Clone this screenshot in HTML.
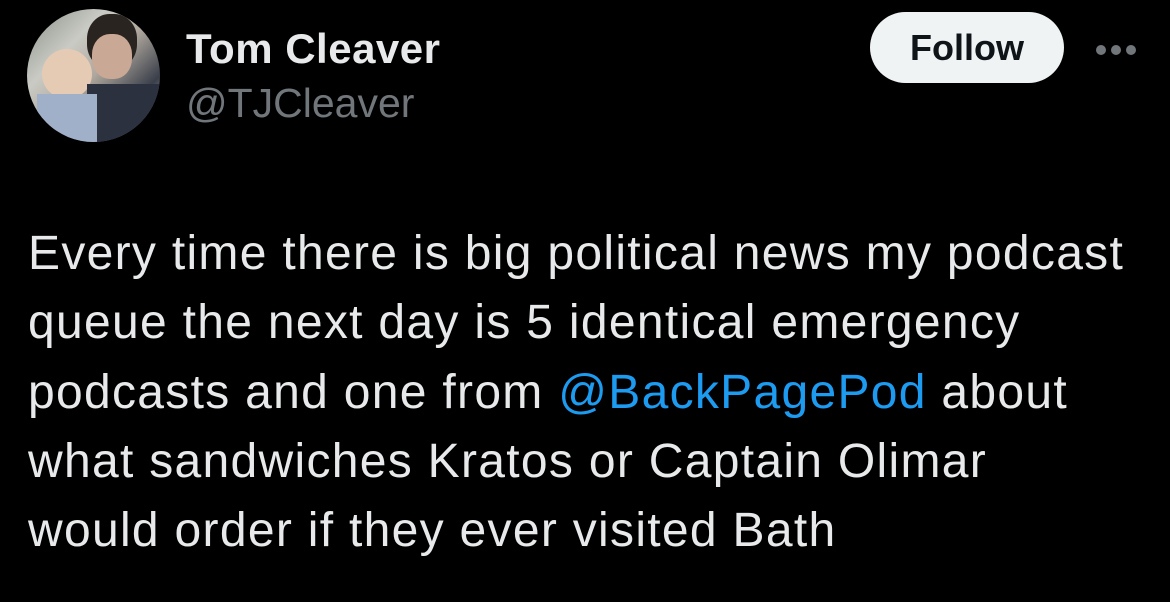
<!DOCTYPE html>
<html><head><style>
body{margin:0;width:1170px;height:602px;background:#000;overflow:hidden;font-family:"Liberation Sans",sans-serif;position:relative}
.av{position:absolute;left:27px;top:9px;width:133px;height:133px;border-radius:50%;overflow:hidden;background:linear-gradient(135deg,#8a8f88 0%,#c9cbc4 30%,#b0a89e 50%,#3a3f4a 75%,#d9dde2 100%)}
.name{position:absolute;left:186px;top:25px;font-size:42px;letter-spacing:0.5px;font-weight:bold;color:#e7e9ea}
.handle{position:absolute;left:186px;top:80px;font-size:41px;color:#71767b}
.follow{position:absolute;left:870px;top:12px;width:194px;height:71px;border-radius:36px;background:#eff3f4;color:#0f1419;font-size:36px;font-weight:bold;text-align:center;line-height:71px}
.dots{position:absolute;left:1096px;top:42px}
.dots span{display:inline-block;width:10px;height:10px;border-radius:50%;background:#71767b;margin-right:5px}
.text{position:absolute;left:28px;top:219px;white-space:nowrap;font-size:48px;letter-spacing:1.3px;line-height:69.3px;color:#e7e9ea}
.text a{color:#1d9bf0}
</style></head><body>
<div class="av">
<div style="position:absolute;left:60px;top:5px;width:50px;height:55px;border-radius:45%;background:#2a2420"></div>
<div style="position:absolute;left:65px;top:25px;width:40px;height:45px;border-radius:45%;background:#c9a896"></div>
<div style="position:absolute;left:15px;top:40px;width:50px;height:50px;border-radius:50%;background:#e6cbb4"></div>
<div style="position:absolute;left:60px;top:75px;width:80px;height:60px;background:#2c3140"></div>
<div style="position:absolute;left:10px;top:85px;width:60px;height:50px;background:#9fb0c8"></div>
</div>
<div class="name">Tom Cleaver</div>
<div class="handle">@TJCleaver</div>
<div class="follow">Follow</div>
<div class="dots"><span></span><span></span><span></span></div>
<div class="text">Every time there is big political news my podcast<br>queue the next day is 5 identical emergency<br>podcasts and one from <a>@BackPagePod</a> about<br>what sandwiches Kratos or Captain Olimar<br>would order if they ever visited Bath</div>
</body></html>
